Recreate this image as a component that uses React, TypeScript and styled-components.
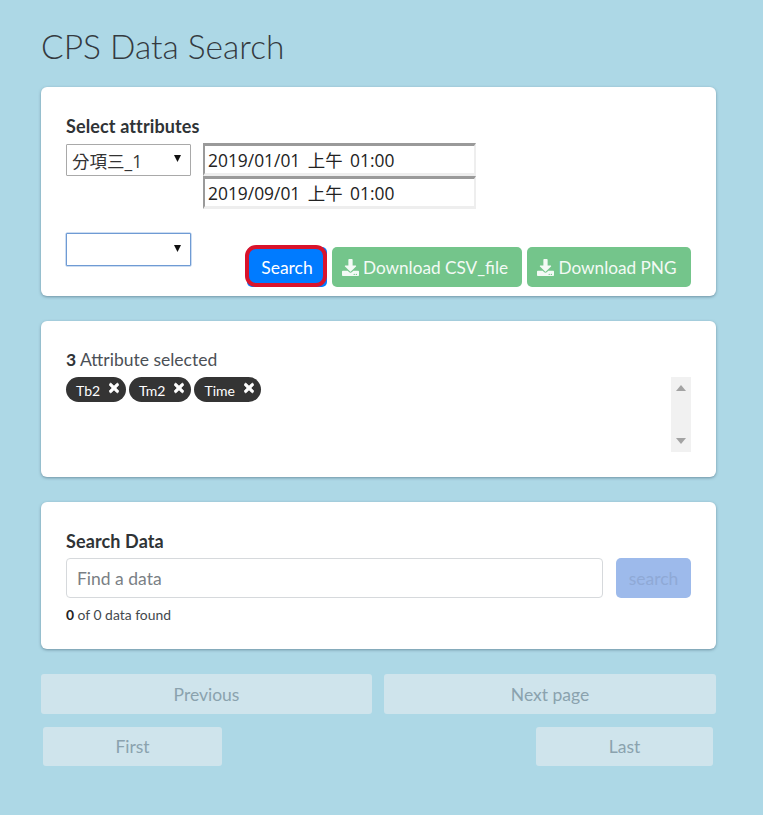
import React from "react";
import styled, { createGlobalStyle } from "styled-components";
import { FaDownload, FaTimes } from "react-icons/fa";

const Global = createGlobalStyle`
  html, body { margin: 0; padding: 0; background: #add8e6; }
  body { font-family: Lato, "Noto Sans CJK TC", sans-serif; color: #343a40; }
  * { box-sizing: border-box; }
`;

const Page = styled.div`
  width: 763px;
  height: 815px;
  padding: 25px 47px 0 41px;
  display: flex;
  flex-direction: column;
`;

const Title = styled.h1`
  margin: 0 0 19px;
  font-size: 33.5px;
  line-height: 43px;
  font-weight: 300;
  color: #343a40;
`;

const Card = styled.section<{ $h: number }>`
  height: ${(p) => p.$h}px;
  margin-bottom: 25px;
  padding: 25px;
  background: #fff;
  border-radius: 6px;
  box-shadow: 0 1px 3px rgba(60, 90, 110, 0.55);
  display: flex;
  flex-direction: column;
`;

const Label = styled.div`
  font-size: 18px;
  line-height: 26px;
  font-weight: 700;
  color: #2f3336;
  margin-top: 1px;
  letter-spacing: 0.12px;
`;

const TopRow = styled.div`
  display: flex;
  gap: 12px;
  align-items: flex-start;
  margin-top: 5px;
`;

const FakeSelect = styled.div<{ $focus?: boolean }>`
  width: 125px;
  height: ${(p) => (p.$focus ? 33 : 32)}px;
  padding: 0 9px 0 5px;
  display: flex;
  align-items: center;
  justify-content: space-between;
  background: #fff;
  border: 1px solid ${(p) => (p.$focus ? "#6f9bd4" : "#a9a9a9")};
  border-radius: 1px;
  box-shadow: ${(p) => (p.$focus ? "0 0 0 0.5px #9cbce4" : "none")};
  font-family: "Open Sans", "Noto Sans CJK TC", sans-serif;
  font-size: 17.5px;
  color: #333;
`;

const Caret = styled.svg`
  width: 7px;
  height: 7px;
  margin-bottom: 3px;
  fill: #111;
`;

const Dates = styled.div`
  display: flex;
  flex-direction: column;
  margin-top: -1px;
`;

const DateInput = styled.input`
  width: 273px;
  height: 33px;
  padding: 0 3px;
  border-width: 3px 2px 3px 2px;
  border-style: solid;
  border-color: #9a9a9a #eeeeee #eeeeee #9a9a9a;
  background: #fff;
  font-family: "Open Sans", "Noto Sans CJK TC", sans-serif;
  font-size: 17.4px;
  word-spacing: 3px;
  color: #222;
  outline: none;
`;

const BottomRow = styled.div`
  display: flex;
  align-items: flex-start;
  margin-top: 24px;
`;

const Actions = styled.div`
  margin-left: auto;
  display: flex;
  gap: 5px;
  margin-top: 14px;
`;

const Button = styled.button<{ $w: number; $bg: string }>`
  position: relative;
  width: ${(p) => p.$w}px;
  height: 40px;
  padding: 0;
  display: flex;
  align-items: center;
  justify-content: center;
  gap: 4px;
  border: none;
  border-radius: 5px;
  background: ${(p) => p.$bg};
  color: #fff;
  font-family: Lato, sans-serif;
  font-size: 17.2px;
`;

const SearchButton = styled(Button)`
  font-size: 17.5px;
  &::after {
    content: "";
    position: absolute;
    left: -2px;
    top: -2px;
    right: 0;
    bottom: 0;
    border: 4px solid #d9142c;
    border-radius: 11px;
  }
`;

const GreenButton = styled(Button)`
  color: #f3faf5;
  padding-right: 4px;
  svg {
    width: 17px;
    height: 17px;
  }
`;

const Count = styled.div`
  font-size: 17.5px;
  line-height: 26px;
  color: #4b5056;
  margin-top: 1px;
  b {
    color: #2f3336;
  }
`;

const ChipArea = styled.div`
  display: flex;
  justify-content: space-between;
  height: 75px;
  margin-top: 4px;
`;

const Chips = styled.div`
  display: flex;
  gap: 3px;
  align-items: flex-start;
`;

const Chip = styled.span`
  height: 25px;
  padding: 1px 7px 0 10px;
  display: flex;
  align-items: center;
  gap: 9px;
  border-radius: 13px;
  background: #343434;
  color: #fff;
  font-size: 14px;
  svg {
    width: 10px;
    height: 14px;
    margin-top: -5px;
    stroke: currentColor;
    stroke-width: 30px;
  }
`;

const Scrollbar = styled.div`
  width: 20px;
  background: #f1f1f1;
  display: flex;
  flex-direction: column;
  justify-content: space-between;
  align-items: center;
  padding: 8px 0;
`;

const ScrollArrow = styled.svg`
  width: 10px;
  height: 6px;
  fill: #a3a3a3;
`;

const SearchRow = styled.div`
  display: flex;
  justify-content: space-between;
  margin-top: 4px;
`;

const FindInput = styled.input`
  width: 537px;
  height: 40px;
  padding: 1px 10px 0;
  border: 1px solid #d6d9dc;
  border-radius: 4px;
  font-family: Lato, sans-serif;
  font-size: 17.5px;
  outline: none;
  &::placeholder {
    color: #7a7f85;
  }
`;

const DisabledSearch = styled(Button)`
  color: #8fa9d6;
  font-size: 17.5px;
`;

const Found = styled.div`
  margin-top: 8px;
  font-size: 13.9px;
  line-height: 18px;
  color: #43484d;
  b {
    color: #222;
  }
`;

const Pager = styled.div<{ $inset?: boolean }>`
  display: flex;
  justify-content: space-between;
  margin: 0 ${(p) => (p.$inset ? 3 : 0)}px 13px ${(p) => (p.$inset ? 2 : 0)}px;
`;

const PageButton = styled.button<{ $w: number; $h: number }>`
  width: ${(p) => p.$w}px;
  height: ${(p) => p.$h}px;
  padding: 0;
  border: none;
  border-radius: 3px;
  background: #cfe4ec;
  color: #8aa2ae;
  font-family: Lato, sans-serif;
  font-size: 17.5px;
  font-weight: 400;
`;

const Triangle = ({ up }: { up: boolean }) => (
  <ScrollArrow viewBox="0 0 10 6">
    <polygon points={up ? "5,0 10,6 0,6" : "0,0 10,0 5,6"} />
  </ScrollArrow>
);

const CaretIcon = () => (
  <Caret viewBox="0 0 7 7">
    <polygon points="0,0 7,0 3.5,7" />
  </Caret>
);

export default function App() {
  return (
    <Page>
      <Global />
      <Title>CPS Data Search</Title>

      <Card $h={209}>
        <Label>Select attributes</Label>
        <TopRow>
          <FakeSelect>
            <span>分項三_1</span>
            <CaretIcon />
          </FakeSelect>
          <Dates>
            <DateInput readOnly value="2019/01/01 上午 01:00" />
            <DateInput readOnly value="2019/09/01 上午 01:00" />
          </Dates>
        </TopRow>
        <BottomRow>
          <FakeSelect $focus>
            <span />
            <CaretIcon />
          </FakeSelect>
          <Actions>
            <SearchButton $w={80} $bg="#007bff">Search</SearchButton>
            <GreenButton $w={190} $bg="#74c58b"><FaDownload />Download CSV_file</GreenButton>
            <GreenButton $w={164} $bg="#74c58b"><FaDownload />Download PNG</GreenButton>
          </Actions>
        </BottomRow>
      </Card>

      <Card $h={156}>
        <Count><b>3</b> Attribute selected</Count>
        <ChipArea>
          <Chips>
            <Chip>Tb2<FaTimes /></Chip>
            <Chip>Tm2<FaTimes /></Chip>
            <Chip>Time<FaTimes /></Chip>
          </Chips>
          <Scrollbar>
            <Triangle up />
            <Triangle up={false} />
          </Scrollbar>
        </ChipArea>
      </Card>

      <Card $h={147}>
        <Label>Search Data</Label>
        <SearchRow>
          <FindInput placeholder="Find a data" />
          <DisabledSearch $w={75} $bg="#9dbaeb">search</DisabledSearch>
        </SearchRow>
        <Found><b>0</b> of 0 data found</Found>
      </Card>

      <Pager>
        <PageButton $w={331} $h={40}>Previous</PageButton>
        <PageButton $w={332} $h={40}>Next page</PageButton>
      </Pager>
      <Pager $inset>
        <PageButton $w={179} $h={39}>First</PageButton>
        <PageButton $w={177} $h={39}>Last</PageButton>
      </Pager>
    </Page>
  );
}
